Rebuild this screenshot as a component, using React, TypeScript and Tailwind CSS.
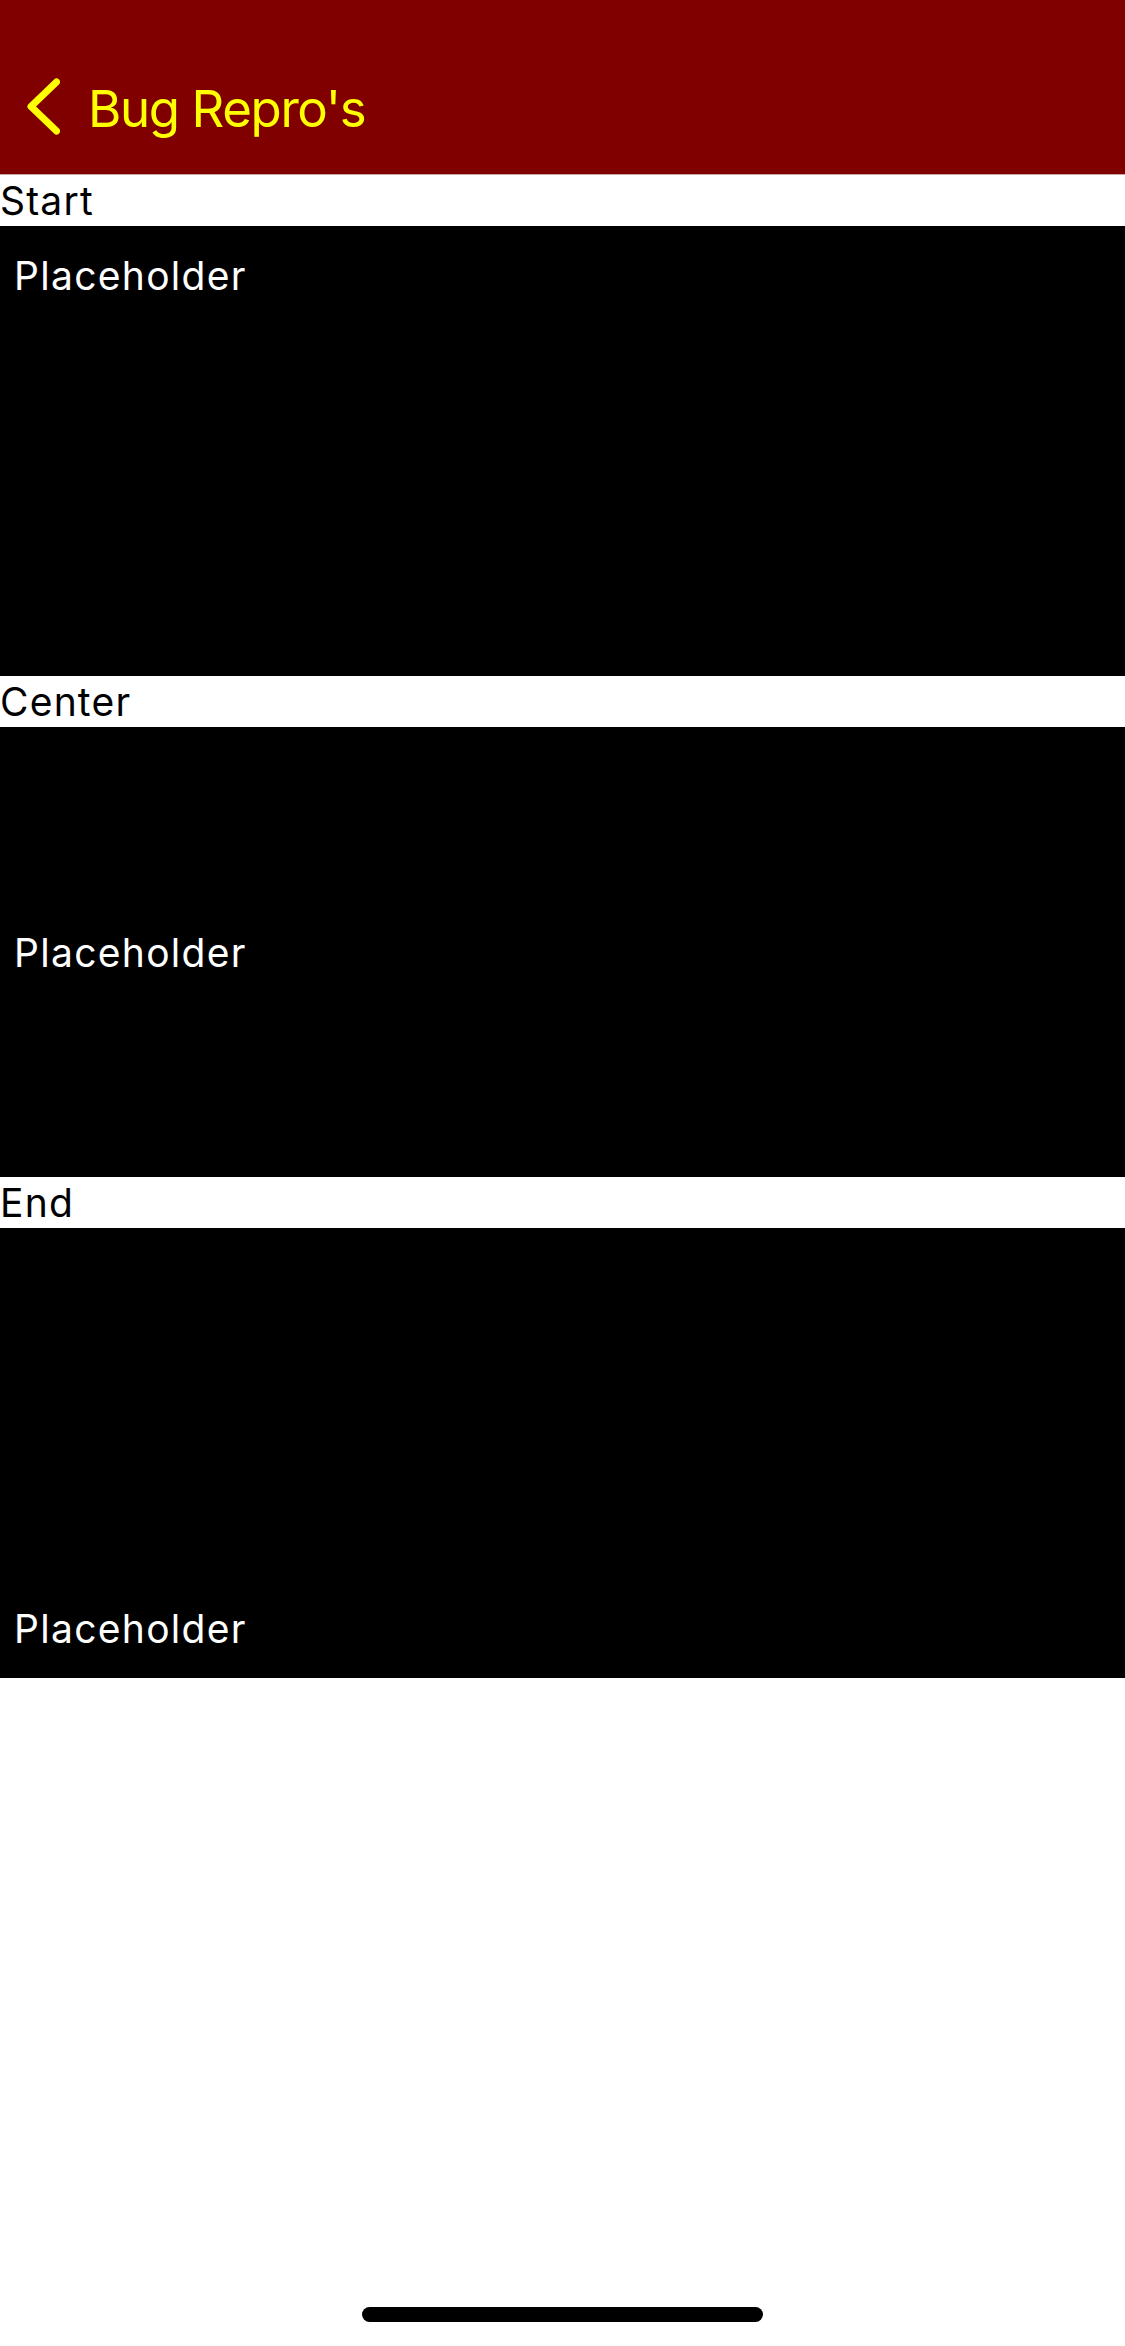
import React from "react";

const font = { fontFamily: "Inter, 'Noto Sans', sans-serif" };

const BackChevron = () => (
  <svg width="40" height="60" viewBox="20 80 40 60" className="shrink-0">
    <path
      d="M56.5 84 L31 108.5 L56.5 133"
      fill="none"
      stroke="#ffff00"
      strokeWidth="7"
      strokeLinecap="round"
      strokeLinejoin="round"
    />
  </svg>
);

const Section = ({
  label,
  align,
}: {
  label: string;
  align: "justify-start" | "justify-center" | "justify-end";
}) => (
  <div>
    <div className="h-[51px] text-[39px] leading-[51px] tracking-[1.2px] text-black">{label}</div>
    <div className={`flex h-[450px] flex-col bg-black py-[24px] pl-[14px] ${align}`}>
      <span className="text-[39px] leading-[51px] tracking-[1.3px] text-white">Placeholder</span>
    </div>
  </div>
);

export default function App() {
  return (
    <div className="flex min-h-[2346px] w-full flex-col bg-white" style={font}>
      {/* Nav bar */}
      <div className="flex h-[175px] items-center border-b border-[#c9a3a3] bg-[#800000] pl-[20px] pt-[42px]">
        <BackChevron />
        <span className="ml-[28px] text-[51px] leading-none tracking-[-1.4px] text-[#ffff00]">Bug Repro's</span>
      </div>

      <Section label="Start" align="justify-start" />
      <Section label="Center" align="justify-center" />
      <Section label="End" align="justify-end" />

      {/* Home indicator */}
      <div className="mt-auto flex justify-center pb-[24px]">
        <div className="h-[15px] w-[401px] rounded-full bg-black" />
      </div>
    </div>
  );
}
